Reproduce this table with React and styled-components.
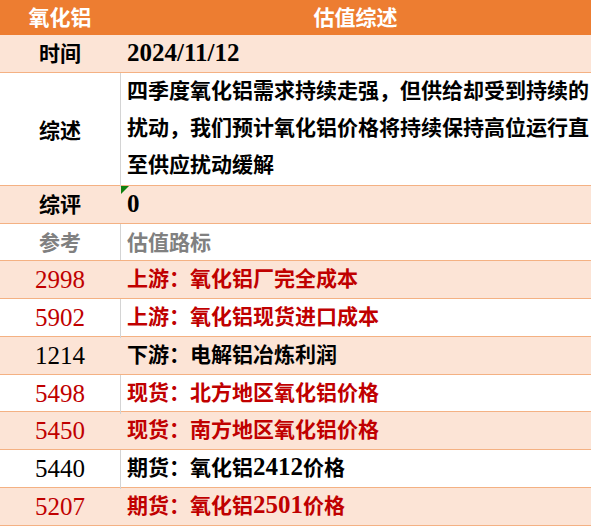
import React from 'react'
import styled, {createGlobalStyle} from 'styled-components'

const GlobalStyle = createGlobalStyle`
    html, body {
        margin: 0;
        padding: 0;
        background: #ffffff;
    }
    body {
        font-family: "Liberation Serif", "Noto Sans CJK SC", serif;
    }
`

const rows = [
    {label: '2998', text: ['上游：氧化铝厂完全成本'], red: true},
    {label: '5902', text: ['上游：氧化铝现货进口成本'], red: true},
    {label: '1214', text: ['下游：电解铝冶炼利润']},
    {label: '5498', text: ['现货：北方地区氧化铝价格'], red: true},
    {label: '5450', text: ['现货：南方地区氧化铝价格'], red: true},
    {label: '5440', text: ['期货：氧化铝', '2412', '价格']},
    {label: '5207', text: ['期货：氧化铝', '2501', '价格'], red: true},
]

const App = () => {
    return(
        <>
            <GlobalStyle/>
            <Sheet>
                <Header>
                    <HeadCell>氧化铝</HeadCell>
                    <HeadCell>估值综述</HeadCell>
                </Header>
                <Row shaded>
                    <Label>时间</Label>
                    <Value shaded><Num>2024/11/12</Num></Value>
                </Row>
                <Row tall>
                    <Label>综述</Label>
                    <Value>
                        <Line>四季度氧化铝需求持续走强，但供给却受到持续的</Line>
                        <Line>扰动，我们预计氧化铝价格将持续保持高位运行直</Line>
                        <Line>至供应扰动缓解</Line>
                    </Value>
                </Row>
                <Row shaded>
                    <Label>综评</Label>
                    <Value shaded>
                        <Comment/>
                        <Num>0</Num>
                    </Value>
                </Row>
                <Row>
                    <Label muted>参考</Label>
                    <Value muted>估值路标</Value>
                </Row>
                {rows.map((r, i) => (
                    <Row key={r.label} shaded={i % 2 === 0}>
                        <Label red={r.red}><Num light>{r.label}</Num></Label>
                        <Value red={r.red} shaded={i % 2 === 0}>
                            <Line>
                                {r.text.map((t, j) => j === 1 ? <Num key={j}>{t}</Num> : <span key={j}>{t}</span>)}
                            </Line>
                        </Value>
                    </Row>
                ))}
            </Sheet>
        </>
    )
}

export default App

const Sheet = styled.div`
    width: 591px;
    display: flex;
    flex-direction: column;
`

const Header = styled.div`
    display: grid;
    grid-template-columns: 120px 1fr;
    height: 35px;
    background-color: #ed7d31;
`

const HeadCell = styled.div`
    display: flex;
    align-items: center;
    justify-content: center;
    color: #ffffff;
    font-size: 21px;
    font-weight: bold;
    padding-bottom: 3px;
`

const Row = styled.div`
    display: grid;
    grid-template-columns: 120px 1fr;
    box-sizing: border-box;
    height: ${props => props.tall ? '113px' : '37.75px'};
    background-color: ${props => props.shaded ? '#fce4d6' : '#ffffff'};
    border-bottom: 1px solid #f4b183;
`

const Label = styled.div`
    display: flex;
    align-items: center;
    justify-content: center;
    font-size: 21px;
    font-weight: bold;
    color: ${props => props.red ? '#c00000' : props.muted ? '#808080' : '#000000'};
    padding-bottom: 2px;
`

const Value = styled.div`
    position: relative;
    display: flex;
    flex-direction: column;
    justify-content: center;
    padding-left: 6px;
    padding-bottom: 2px;
    font-size: 21px;
    font-weight: bold;
    white-space: nowrap;
    color: ${props => props.red ? '#c00000' : props.muted ? '#808080' : '#000000'};
    border-left: 1px solid ${props => props.shaded ? 'transparent' : '#d4d4d4'};
`

const Line = styled.div`
    height: 37.3px;
    line-height: 37.3px;
`

const Num = styled.span`
    font-family: "Liberation Serif", serif;
    font-size: 25px;
    font-weight: ${props => props.light ? 'normal' : 'bold'};
    line-height: 1;
`

const Comment = styled.div`
    position: absolute;
    left: 0;
    top: 0;
    width: 0;
    height: 0;
    border-top: 8px solid #0f800f;
    border-right: 8px solid transparent;
`
